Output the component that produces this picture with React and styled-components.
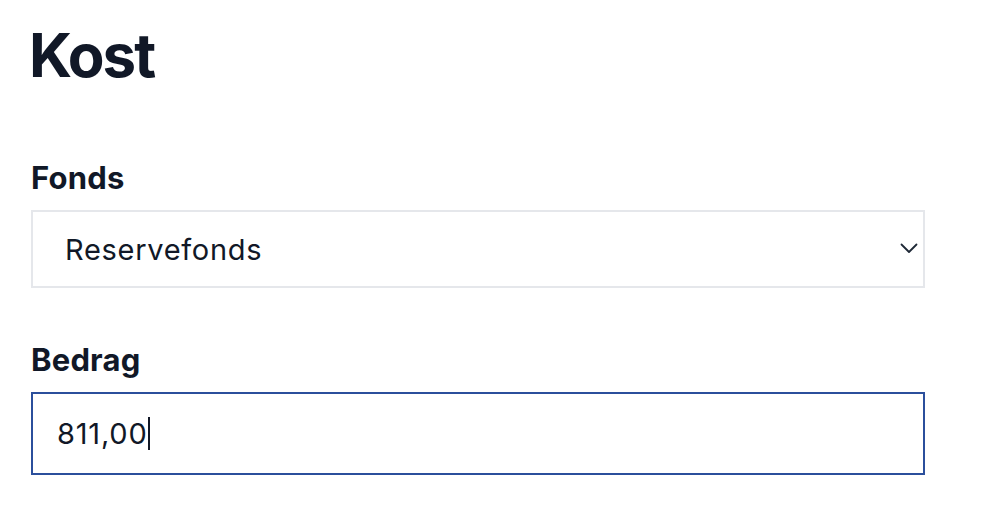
import React from "react";
import styled, { createGlobalStyle } from "styled-components";

const GlobalStyle = createGlobalStyle`
  * { box-sizing: border-box; }
  body {
    margin: 0;
    background: #ffffff;
    font-family: Inter, "Noto Sans", "Liberation Sans", sans-serif;
    color: #111827;
  }
`;

const App = () => {
  return (
    <>
      <GlobalStyle />
      <Page>
        <Title>Kost</Title>

        <Field>
          <Label>Fonds</Label>
          <SelectWrap>
            <Select defaultValue="reserve">
              <option value="reserve">Reservefonds</option>
              <option value="werk">Werkkapitaal</option>
            </Select>
            <Chevron viewBox="0 0 18 11" fill="none">
              <path
                d="M1.5 1.5l7.5 7.5 7.5-7.5"
                stroke="#1f2937"
                strokeWidth="1.8"
                strokeLinecap="round"
                strokeLinejoin="round"
              />
            </Chevron>
          </SelectWrap>
        </Field>

        <Field>
          <Label>Bedrag</Label>
          <AmountBox>
            <span>811,00</span>
            <Caret />
          </AmountBox>
        </Field>
      </Page>
    </>
  );
};

export default App;

const Page = styled.div`
  width: 894px;
  margin-left: 31px;
  padding-top: 23px;
`;

const Title = styled.h1`
  margin: 0 0 73px -2px;
  font-size: 60px;
  line-height: 64px;
  font-weight: 700;
  letter-spacing: -2px;
  color: #111827;
`;

const Field = styled.div`
  display: flex;
  flex-direction: column;
  gap: 14px;
  margin-bottom: 54px;
`;

const Label = styled.label`
  font-size: 31px;
  line-height: 36px;
  font-weight: 700;
  color: #111827;
  letter-spacing: 0.2px;
`;

const SelectWrap = styled.div`
  position: relative;
`;

const Select = styled.select`
  appearance: none;
  -webkit-appearance: none;
  width: 100%;
  height: 78px;
  padding: 0 60px 0 32px;
  border: 2px solid #e5e7eb;
  border-radius: 0;
  background: #ffffff;
  font-family: inherit;
  font-size: 29px;
  letter-spacing: 0.7px;
  color: #111827;
  outline: none;
`;

const Chevron = styled.svg`
  position: absolute;
  right: 7px;
  top: 33px;
  width: 18px;
  height: 11px;
  pointer-events: none;
`;

const AmountBox = styled.div`
  display: flex;
  align-items: center;
  height: 83px;
  padding: 0 24px;
  border: 2px solid #2b4f9c;
  font-size: 29px;
  letter-spacing: 0.8px;
  color: #111827;
`;

const Caret = styled.span`
  display: inline-block;
  width: 2px;
  height: 33px;
  background: #111827;
`;
